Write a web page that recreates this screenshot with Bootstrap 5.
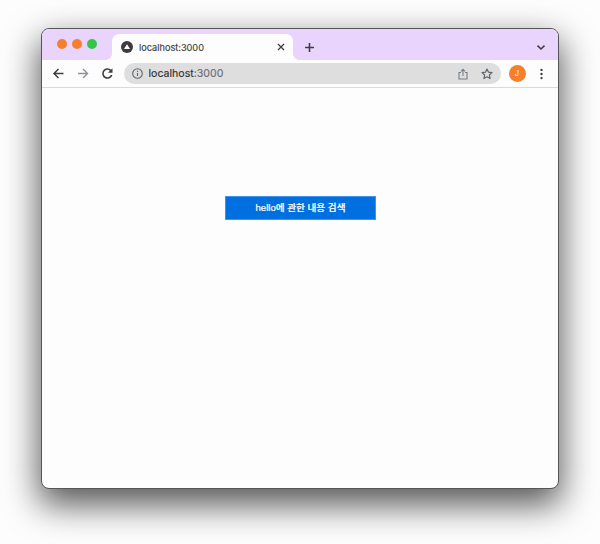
<!DOCTYPE html>
<html lang="ko">
<head>
<meta charset="utf-8">
<title>localhost:3000</title>
<meta name="viewport" content="width=device-width, initial-scale=1">
<link href="https://cdn.jsdelivr.net/npm/bootstrap@5.3.0/dist/css/bootstrap.min.css" rel="stylesheet">
<style>
  body { background: #fdfdfd; font-family: Inter, "Noto Sans CJK KR", sans-serif; padding: 28px 41px 0; height: 544px; }
  svg { display: block; flex: none; }
  .browser { width: 518px; height: 461px; border: 1px solid #55555a; border-radius: 8px; background: #fdfdfd; box-shadow: 0 14px 34px 2px rgba(0,0,0,.66); }
  .tab-strip { height: 31px; background: #e8d4fc; padding-left: 15px; padding-right: 11.5px; }
  .light { width: 10px; height: 10px; background: #f77f2b; margin-right: 5px; margin-top: 10px; }
  .light-green { background: #33c748; }
  .page-tab { width: 181px; height: 26px; margin: 5px 0 0 10px; background: #fdfdfd; border-radius: 7px 7px 0 0; padding: 0 8px 0 9px; font-size: 9.2px; color: #3c4043; }
  .page-tab::before, .page-tab::after { content: ""; position: absolute; bottom: 0; width: 6px; height: 6px; }
  .page-tab::before { left: -6px; background: radial-gradient(circle at 0 0, transparent 5.5px, #fdfdfd 6px); }
  .page-tab::after { right: -6px; background: radial-gradient(circle at 100% 0, transparent 5.5px, #fdfdfd 6px); }
  .tab-label { margin-left: 6px; padding-top: 1px; -webkit-text-stroke: .15px #3c4043; }
  .toolbar { height: 28px; border-bottom: 1px solid #dadada; padding-left: 10px; padding-right: 11px; }
  .reload { margin-left: 4px; }
  .address { width: 377px; height: 21px; margin-left: 9.5px; background: #dedede; padding: 0 8px; font-size: 10.6px; color: #2f3135; }
  .address .port { color: #6a6e75; }
  .address-text { margin-left: 6px; padding-top: 1px; -webkit-text-stroke: .15px; }
  .bookmark { margin-left: 13px; }
  .avatar { width: 17px; height: 17px; margin-left: 8px; background: #f77f2b; color: #fff; font-size: 7.5px; }
  .search-btn { width: 151px; height: 24px; margin-top: 108px; margin-left: 1px; padding: 0; border: 1px solid #3f93e8; border-radius: 0; background: #0070e0; color: #fff; font-family: "Liberation Sans", "Noto Sans CJK KR", sans-serif; font-size: 9.6px; font-weight: 500; line-height: 20px; -webkit-text-stroke: .2px #fff; }
  .search-btn:hover { background: #0064c8; color: #fff; }
</style>
</head>
<body class="overflow-hidden">
<div class="browser d-flex flex-column overflow-hidden">
  <div class="tab-strip d-flex flex-shrink-0">
    <span class="light rounded-circle"></span>
    <span class="light rounded-circle"></span>
    <span class="light light-green rounded-circle"></span>
    <div class="page-tab position-relative d-flex align-items-center">
      <svg width="12" height="12" viewBox="0 0 12 12"><circle cx="6" cy="6" r="6" fill="#3c3c3f"/><path d="M6 3.2 9 8H3z" fill="#fff"/></svg>
      <span class="tab-label me-auto lh-1">localhost:3000</span>
      <svg width="8" height="8" viewBox="0 0 8 8" stroke="#3c4043" stroke-width="1.3"><path d="M1 1l6 6M7 1 1 7"/></svg>
    </div>
    <svg class="mt-2 ms-2" width="16" height="20" viewBox="0 0 16 20" stroke="#3c4043" stroke-width="1.6"><path d="M8.500 6v9M4 10.500h9"/></svg>
    <svg class="ms-auto mt-3" width="11" height="6" viewBox="0 0 11 6" fill="none" stroke="#3c4043" stroke-width="1.6"><path d="M1.500.600 5 4 8.500.600"/></svg>
  </div>
  <div class="toolbar d-flex align-items-center flex-shrink-0">
    <svg width="13" height="13" viewBox="0 0 13 13" fill="none" stroke="#3c4043" stroke-width="1.5"><path d="M11.500 6.500h-9M6.500 2 2 6.500 6.500 11"/></svg>
    <svg class="ms-2 me-1" width="20" height="13" viewBox="0 0 20 13" fill="none" stroke="#8d929b" stroke-width="1.4"><path d="M5 6.500h9M10 2l4.500 4.500L10 11"/></svg>
    <svg class="reload" width="13" height="13" viewBox="0 0 13 13" fill="none" stroke="#3c4043" stroke-width="1.6"><path d="M10.700 8A4.500 4.500 0 1 1 9.700 3.400L10.500 4.200"/><path d="M11.500 1.200v4.600H6.900z" fill="#3c4043" stroke="none"/></svg>
    <div class="address rounded-pill d-flex align-items-center">
      <svg width="11" height="11" viewBox="0 0 11 11" fill="none" stroke="#5f6670" stroke-width="1.1"><circle cx="5.500" cy="5.500" r="4.800"/><path d="M5.500 4.900v3.200M5.500 2.700v1.200"/></svg>
      <span class="address-text me-auto lh-1">localhost<span class="port">:3000</span></span>
      <svg width="10" height="12" viewBox="0 0 10 12" fill="none" stroke="#777c85" stroke-width="1.1"><path d="M3 4.500H1v6.500h8V4.500H7M5 8V1.500M3 3.300l2-2 2 2"/></svg>
      <svg class="bookmark" width="12" height="12" viewBox="0 0 12 12" fill="none" stroke="#5f6368" stroke-width="1.2" stroke-linejoin="round"><path d="m6 1 1.500 3.200 3.500.400-2.600 2.400.700 3.500L6 8.800l-3.100 1.700.700-3.500L1 4.600l3.500-.400z"/></svg>
    </div>
    <span class="avatar rounded-circle d-flex align-items-center justify-content-center lh-1">J</span>
    <svg class="ms-auto" width="11" height="12" viewBox="0 0 11 12" fill="#3c4043"><circle cx="5.500" cy="1.900" r="1.200"/><circle cx="5.500" cy="6" r="1.200"/><circle cx="5.500" cy="10.100" r="1.200"/></svg>
  </div>
  <main class="flex-grow-1 d-flex justify-content-center align-items-start">
    <button class="btn search-btn" type="button">hello에 관한 내용 검색</button>
  </main>
</div>
<script src="https://cdn.jsdelivr.net/npm/bootstrap@5.3.0/dist/js/bootstrap.bundle.min.js"></script>
</body>
</html>
